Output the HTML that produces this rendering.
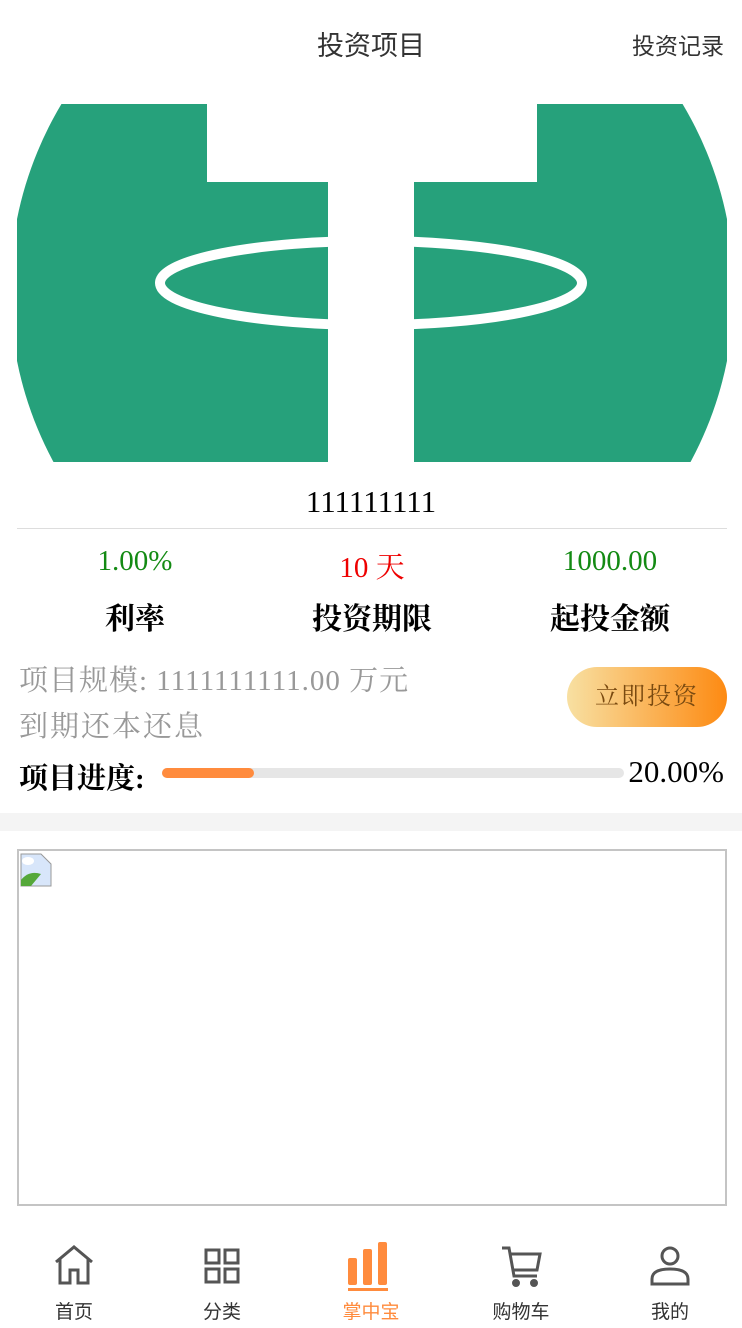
<!DOCTYPE html>
<html><head><meta charset="utf-8"><style>
*{margin:0;padding:0;box-sizing:border-box}
body{width:742px;height:1328px;background:#fff;position:relative;overflow:hidden;font-family:"Liberation Serif","Noto Serif CJK SC",serif}
.a{position:absolute}
.sans{font-family:"Liberation Sans","Noto Sans CJK SC",sans-serif}
</style></head><body>
<div class="a sans" style="left:0;width:742px;top:24px;text-align:center;font-size:27px;color:#333">投资项目</div>
<div class="a sans" style="right:18px;top:27px;font-size:23px;color:#333">投资记录</div>
<svg class="a" style="left:17px;top:104px" width="710" height="358" viewBox="17 104 710 358">
<circle cx="372" cy="290" r="362" fill="#26a17b"/>
<rect x="207" y="104" width="330" height="78" fill="#fff"/>
<rect x="328" y="182" width="86" height="280" fill="#fff"/>
<ellipse cx="371" cy="283" rx="211" ry="42" fill="none" stroke="#fff" stroke-width="10"/>
</svg>
<div class="a" style="left:0;width:742px;top:484px;text-align:center;font-size:31px;color:#000">111111111</div>
<div class="a" style="left:17px;width:710px;top:528px;height:1px;background:#ddd"></div>
<div class="a" style="left:35px;width:200px;top:545px;text-align:center;font-size:29px;color:#138a13">1.00%</div>
<div class="a" style="left:272px;width:200px;top:545px;text-align:center;font-size:29px;color:#e00">10 天</div>
<div class="a" style="left:510px;width:200px;top:545px;text-align:center;font-size:29px;color:#138a13">1000.00</div>
<div class="a" style="left:35px;width:200px;top:594px;text-align:center;font-size:30px;font-weight:bold">利率</div>
<div class="a" style="left:272px;width:200px;top:594px;text-align:center;font-size:30px;font-weight:bold">投资期限</div>
<div class="a" style="left:510px;width:200px;top:594px;text-align:center;font-size:30px;font-weight:bold">起投金额</div>
<div class="a" style="left:19px;top:658px;font-size:29px;color:#999;letter-spacing:1px">项目规模: 1111111111.00 万元</div>
<div class="a" style="left:19px;top:704px;font-size:29px;color:#999;letter-spacing:2px">到期还本还息</div>
<div class="a" style="left:567px;top:667px;width:160px;height:60px;border-radius:30px;background:linear-gradient(90deg,#f8e0a2,#fd8a12);color:#7a4a10;font-size:24px;text-align:center;line-height:60px;letter-spacing:2px">立即投资</div>
<div class="a" style="left:19px;top:756px;font-size:29px;font-weight:bold">项目进度:</div>
<div class="a" style="left:162px;top:768px;width:462px;height:10px;border-radius:5px;background:#e6e6e6"><div style="width:92px;height:10px;border-radius:5px;background:#ff8b3d"></div></div>
<div class="a" style="right:18px;top:754px;font-size:31px">20.00%</div>
<div class="a" style="left:0;top:813px;width:742px;height:18px;background:#f4f4f4"></div>
<div class="a" style="left:17px;top:849px;width:710px;height:357px;border:2px solid #c4c4c4"></div>
<svg class="a" style="left:20px;top:853px" width="34" height="34"><path d="M1 1h20l10 10v22H1z" fill="#d8e6fa" stroke="#999"/><path d="M1 33v-6q8-10 20-6l-10 12z" fill="#55a83a"/><ellipse cx="8" cy="8" rx="6" ry="4" fill="#fff"/></svg>
<div class="a sans" style="left:0;top:1226px;width:742px;height:102px;background:#fff"></div>
<svg class="a" style="left:52px;top:1244px" width="44" height="44" fill="none" stroke="#555" stroke-width="3"><path d="M4 18L22 3l18 15M8 15v24h10V26h8v13h10V15"/></svg>
<svg class="a" style="left:202px;top:1246px" width="40" height="40" fill="none" stroke="#555" stroke-width="3"><rect x="4" y="4" width="13" height="13"/><rect x="23" y="4" width="13" height="13"/><rect x="4" y="23" width="13" height="13"/><rect x="23" y="23" width="13" height="13"/></svg>
<svg class="a" style="left:346px;top:1240px" width="50" height="52" fill="#ff8b3d"><rect x="2" y="18" width="9" height="27" rx="2"/><rect x="17" y="9" width="9" height="36" rx="2"/><rect x="32" y="2" width="9" height="43" rx="2"/><rect x="2" y="48" width="40" height="3"/></svg>
<svg class="a" style="left:500px;top:1244px" width="46" height="44" fill="none" stroke="#555" stroke-width="3"><path d="M2 4h7l5 28h23M10 10h30l-3 16H13"/><circle cx="16" cy="39" r="2.5" fill="#555"/><circle cx="34" cy="39" r="2.5" fill="#555"/></svg>
<svg class="a" style="left:648px;top:1244px" width="46" height="44" fill="none" stroke="#555" stroke-width="3"><circle cx="22" cy="12" r="8"/><path d="M4 40v-5q0-10 18-10t18 10v5z"/></svg>
<div class="a sans" style="left:24px;width:100px;top:1297px;text-align:center;font-size:19px;color:#333">首页</div>
<div class="a sans" style="left:172px;width:100px;top:1297px;text-align:center;font-size:19px;color:#333">分类</div>
<div class="a sans" style="left:321px;width:100px;top:1297px;text-align:center;font-size:19px;color:#ff8b3d">掌中宝</div>
<div class="a sans" style="left:471px;width:100px;top:1297px;text-align:center;font-size:19px;color:#333">购物车</div>
<div class="a sans" style="left:620px;width:100px;top:1297px;text-align:center;font-size:19px;color:#333">我的</div>
</body></html>
